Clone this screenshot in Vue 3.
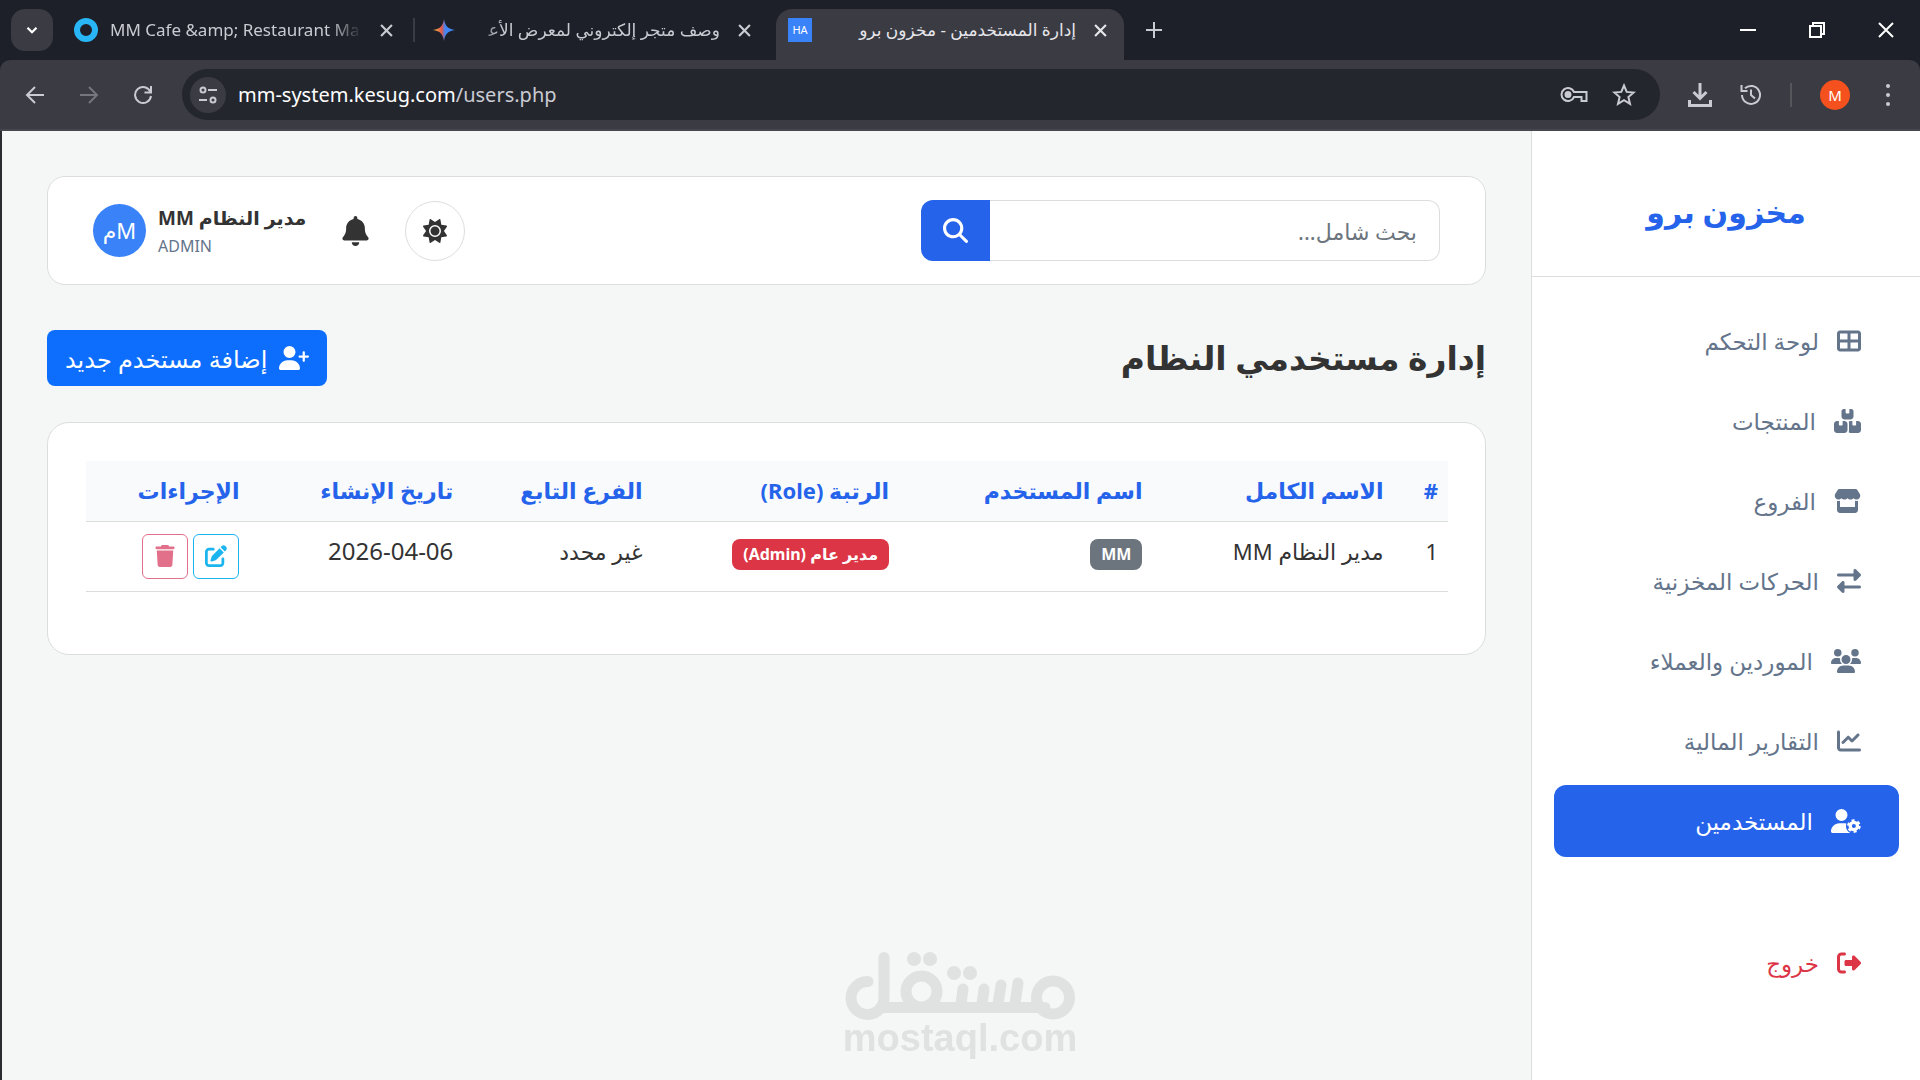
<template>
  <div class="window">
    <header class="browser">
      <div class="tab-strip">
        <button class="tab-search" aria-label="Search tabs">
          <svg viewBox="0 0 24 24"><path d="M6 9l6 6 6-6" fill="none" stroke="currentColor" stroke-width="3" /></svg>
        </button>

        <div class="tab first">
          <svg class="favicon" viewBox="0 0 24 24"><circle cx="12" cy="12" r="9" fill="none" stroke="#29b6f6" stroke-width="6" /></svg>
          <span class="tab-title fade-end">{{ tabs.cafe }}</span>
          <button class="tab-close" aria-label="Close"><svg viewBox="0 0 12 12"><path :d="icons.cross" /></svg></button>
        </div>
        <span class="tab-divider"></span>
        <div class="tab second">
          <svg class="favicon" viewBox="0 0 24 24">
            <defs>
              <linearGradient id="spark" x1="0" y1="0" x2="1" y2="0">
                <stop offset="0" stop-color="#f5b83d" />
                <stop offset="0.4" stop-color="#e2574c" />
                <stop offset="0.55" stop-color="#4285f4" />
                <stop offset="1" stop-color="#4285f4" />
              </linearGradient>
            </defs>
            <path d="M12 1c1 7 4 10 11 11-7 1-10 4-11 11-1-7-4-10-11-11 7-1 10-4 11-11z" fill="url(#spark)" />
          </svg>
          <span class="tab-title fade-start" dir="rtl">{{ tabs.shop }}</span>
          <button class="tab-close" aria-label="Close"><svg viewBox="0 0 12 12"><path :d="icons.cross" /></svg></button>
        </div>
        <div class="tab active">
          <span class="favicon favicon-text">HA</span>
          <span class="tab-title" dir="rtl">{{ tabs.users }}</span>
          <button class="tab-close" aria-label="Close"><svg viewBox="0 0 12 12"><path :d="icons.cross" /></svg></button>
        </div>
        <button class="new-tab" aria-label="New tab">
          <svg viewBox="0 0 16 16"><path d="M8 0v16M0 8h16" /></svg>
        </button>

        <div class="window-controls">
          <button aria-label="Minimize"><svg viewBox="0 0 16 16"><path d="M0 8h16" /></svg></button>
          <button aria-label="Restore"><svg viewBox="0 0 16 16"><path d="M1 4h11v11H1zM4 4V1h11v11h-3" /></svg></button>
          <button aria-label="Close window"><svg viewBox="0 0 16 16"><path d="M1 1l14 14M15 1L1 15" /></svg></button>
        </div>
      </div>

      <div class="toolbar">
        <div class="nav-buttons">
          <button aria-label="Back"><svg viewBox="0 0 20 20"><path d="M19 10H2M10 2l-8 8 8 8" /></svg></button>
          <button class="dim" aria-label="Forward"><svg viewBox="0 0 20 20"><path d="M1 10h17M10 2l8 8-8 8" /></svg></button>
          <button aria-label="Reload"><svg viewBox="0 0 20 20"><path d="M17.5 7A8 8 0 1 0 18 11M18 1v6.5h-6.5" /></svg></button>
        </div>
        <div class="omnibox">
          <button class="site-info" aria-label="Site information">
            <svg viewBox="0 0 20 20"><circle cx="5" cy="5" r="2.5" /><path d="M10 5h9M1 15h8" /><circle cx="15" cy="15" r="2.5" /></svg>
          </button>
          <span class="url"><b>mm-system.kesug.com</b>/users.php</span>
          <button aria-label="Passwords">
            <svg class="key" viewBox="0 0 28 20"><path d="M14 7h12.5v9h-5v-4H14a6.5 6.5 0 1 1 0-5z" /><circle class="solid" cx="8" cy="9.5" r="2.5" /></svg>
          </button>
          <button aria-label="Bookmark">
            <svg class="star" viewBox="0 0 24 24"><path d="M12 2.5l2.7 6.400 6.900.6-5.200 4.500 1.600 6.800-6-3.600-6 3.600L7.600 14 2.400 9.500l6.900-.6z" /></svg>
          </button>
        </div>
        <div class="toolbar-end">
          <button aria-label="Downloads"><svg class="large" viewBox="0 0 24 24"><path d="M12 0v15M5.500 9l6.500 6.500L18.500 9M1.500 17v5.500h21V17" /></svg></button>
          <button aria-label="History"><svg viewBox="0 0 22 22"><path d="M2 11a9 9 0 1 0 3-6.800M1.500 1v6h6M11 5.500V11l4 3.500" /></svg></button>
          <span class="toolbar-divider"></span>
          <button class="profile" aria-label="Profile">M</button>
          <button aria-label="Menu"><svg class="dots" viewBox="0 0 4 22"><circle cx="2" cy="2" r="2" /><circle cx="2" cy="11" r="2" /><circle cx="2" cy="20" r="2" /></svg></button>
        </div>
      </div>
    </header>

    <div class="app" dir="rtl" lang="ar">
      <aside class="sidebar">
        <div class="brand">مخزون برو</div>
        <nav class="menu">
          <a
            v-for="item in menu"
            :key="item.label"
            href="#"
            class="menu-link"
            :class="{ active: item.active, logout: item.logout }"
          >
            <svg class="icon" :class="{ wide: item.width === 640, mid: item.width === 576 }" :viewBox="`0 0 ${item.width} 512`">
              <path :d="item.icon" />
              <g v-if="item.active">
                <circle cx="488" cy="364" r="78" fill="none" stroke="currentColor" stroke-width="70" />
                <circle cx="488" cy="364" r="124" fill="none" stroke="currentColor" stroke-width="44" stroke-dasharray="65 64.85" />
              </g>
            </svg>
            <span>{{ item.label }}</span>
          </a>
        </nav>
      </aside>

      <main class="content">
        <section class="topbar">
          <form class="search" @submit.prevent>
            <input v-model="query" type="text" aria-label="بحث شامل" placeholder="بحث شامل..." />
            <button type="submit" aria-label="بحث">
              <svg viewBox="0 0 512 512"><path :d="icons.search" /></svg>
            </button>
          </form>
          <div class="account">
            <button class="theme-toggle" aria-label="المظهر"><svg viewBox="0 0 512 512"><path :d="icons.sun" /></svg></button>
            <button class="bell" aria-label="الإشعارات"><svg viewBox="0 0 448 512"><path :d="icons.bell" /></svg></button>
            <div class="profile-card">
              <div class="profile-text">
                <strong>مدير النظام MM</strong>
                <small>ADMIN</small>
              </div>
              <span class="avatar">Mم</span>
            </div>
          </div>
        </section>

        <div class="page-head">
          <h1>إدارة مستخدمي النظام</h1>
          <button class="add-user">
            <svg viewBox="0 0 640 512"><path :d="icons.userPlus" /></svg>
            <span>إضافة مستخدم جديد</span>
          </button>
        </div>

        <section class="card">
          <table>
            <thead>
              <tr>
                <th class="c-id">#</th>
                <th class="c-name">الاسم الكامل</th>
                <th class="c-login">اسم المستخدم</th>
                <th class="c-role">الرتبة (Role)</th>
                <th class="c-branch">الفرع التابع</th>
                <th class="c-date">تاريخ الإنشاء</th>
                <th class="c-actions">الإجراءات</th>
              </tr>
            </thead>
            <tbody>
              <tr v-for="user in users" :key="user.id">
                <td>{{ user.id }}</td>
                <td>{{ user.name }}</td>
                <td><span class="badge">{{ user.login }}</span></td>
                <td><span class="badge danger">{{ user.role }}</span></td>
                <td>{{ user.branch }}</td>
                <td class="date">{{ user.created }}</td>
                <td>
                  <div class="actions">
                    <button class="edit" aria-label="تعديل"><svg viewBox="0 0 512 512"><path :d="icons.edit" /></svg></button>
                    <button class="delete" aria-label="حذف"><svg viewBox="0 0 448 512"><path :d="icons.trash" /></svg></button>
                  </div>
                </td>
              </tr>
            </tbody>
          </table>
        </section>
      </main>
    </div>

    <div class="watermark">
      <svg viewBox="0 0 230 68">
        <path d="M39 5.500V45.500A16.500 16.500 0 1 1 23 29.500M36 55.500H200M118 37l-2 15M139 37l-2 15M156 33l-3 19M173 31l-3 21" />
        <circle cx="76.5" cy="39.5" r="15.5" />
        <circle cx="208" cy="45.5" r="16.5" />
        <g class="dot">
          <circle cx="69" cy="7" r="7" />
          <circle cx="85" cy="7" r="7" />
          <circle cx="109" cy="21" r="7" />
          <circle cx="125" cy="21" r="7" />
        </g>
      </svg>
      <span>mostaql.com</span>
    </div>
  </div>
</template>

<script setup>
import { ref } from 'vue'

const query = ref('')

const tabs = {
  cafe: 'MM Cafe &amp; Restaurant Ma',
  shop: 'وصف متجر إلكتروني لمعرض الأع\u200d',
  users: 'إدارة المستخدمين - مخزون برو'
}

const icons = {
  cross: 'M1 1l10 10M11 1L1 11',
  search: 'M416 208c0 45.9-14.9 88.3-40 122.7L502.6 457.4c12.5 12.5 12.5 32.8 0 45.3s-32.8 12.5-45.3 0L330.7 376c-34.4 25.2-76.8 40-122.7 40C93.1 416 0 322.9 0 208S93.1 0 208 0S416 93.1 416 208zM208 352a144 144 0 1 0 0-288 144 144 0 1 0 0 288z',
  sun: 'M361.5 1.2c5 2.1 8.6 6.6 9.6 11.9L391 121l107.9 19.8c5.3 1 9.8 4.6 11.9 9.6s1.5 10.7-1.6 15.2L446.9 256l62.3 90.3c3.1 4.5 3.7 10.2 1.6 15.2s-6.6 8.6-11.9 9.6L391 391 371.1 498.9c-1 5.3-4.6 9.8-9.6 11.9s-10.7 1.5-15.2-1.6L256 446.9l-90.3 62.3c-4.5 3.1-10.2 3.7-15.2 1.6s-8.6-6.6-9.6-11.9L121 391 13.1 371.1c-5.3-1-9.8-4.6-11.9-9.6s-1.5-10.7 1.6-15.2L65.1 256 2.8 165.7c-3.1-4.5-3.7-10.2-1.6-15.2s6.6-8.6 11.9-9.6L121 121 140.9 13.1c1-5.3 4.6-9.8 9.6-11.9s10.7-1.5 15.2 1.6L256 65.1 346.3 2.8c4.5-3.1 10.2-3.7 15.2-1.6zM160 256a96 96 0 1 1 192 0 96 96 0 1 1 -192 0zm224 0a128 128 0 1 0 -256 0 128 128 0 1 0 256 0z',
  bell: 'M224 0c-17.7 0-32 14.3-32 32V51.2C119 66 64 130.6 64 208v18.8c0 47-17.3 92.4-48.5 127.6l-7.4 8.3c-8.4 9.4-10.4 22.9-5.3 34.4S19.4 416 32 416H416c12.6 0 24-7.4 29.2-18.9s3.1-25-5.3-34.4l-7.4-8.3C401.3 319.2 384 273.9 384 226.8V208c0-77.4-55-142-128-156.8V32c0-17.7-14.3-32-32-32zm45.3 493.3c12-12 18.7-28.3 18.7-45.3H224 160c0 17 6.7 33.3 18.7 45.3s28.3 18.7 45.3 18.7s33.3-6.7 45.3-18.7z',
  userPlus: 'M96 128a128 128 0 1 1 256 0A128 128 0 1 1 96 128zM0 482.3C0 383.8 79.8 304 178.3 304h91.4C368.2 304 448 383.8 448 482.3c0 16.4-13.3 29.7-29.7 29.7H29.7C13.3 512 0 498.7 0 482.3zM504 312V248H440c-13.3 0-24-10.7-24-24s10.7-24 24-24h64V136c0-13.3 10.7-24 24-24s24 10.7 24 24v64h64c13.3 0 24 10.7 24 24s-10.7 24-24 24H552v64c0 13.3-10.7 24-24 24s-24-10.7-24-24z',
  edit: 'M471.6 21.7c-21.9-21.9-57.3-21.9-79.2 0L362.3 51.7l97.9 97.9 30.1-30.1c21.9-21.9 21.9-57.3 0-79.2L471.6 21.7zm-299.2 220c-6.1 6.1-10.8 13.6-13.5 21.9l-29.6 88.8c-2.9 8.6-.6 18.1 5.8 24.6s15.9 8.7 24.6 5.8l88.8-29.6c8.2-2.7 15.7-7.4 21.9-13.5L437.7 172.3 339.7 74.3 172.4 241.7zM96 64C43 64 0 107 0 160V416c0 53 43 96 96 96H352c53 0 96-43 96-96V320c0-17.7-14.3-32-32-32s-32 14.3-32 32v96c0 17.7-14.3 32-32 32H96c-17.7 0-32-14.3-32-32V160c0-17.7 14.3-32 32-32h96c17.7 0 32-14.3 32-32s-14.3-32-32-32H96z',
  trash: 'M135.2 17.7L128 32H32C14.3 32 0 46.3 0 64S14.3 96 32 96H416c17.7 0 32-14.3 32-32s-14.3-32-32-32H320l-7.2-14.3C307.4 6.8 296.3 0 284.2 0H163.8c-12.1 0-23.2 6.8-28.6 17.7zM416 128H32L53.2 467c1.6 25.3 22.6 45 47.9 45H346.9c25.3 0 46.3-19.7 47.9-45L416 128z'
}

const menu = [
  {
    label: 'لوحة التحكم',
    width: 512,
    icon: 'M448 96V224H288V96H448zm0 192V416H288V288H448zM224 224H64V96H224V224zM64 288H224V416H64V288zM64 32C28.7 32 0 60.7 0 96V416c0 35.3 28.7 64 64 64H448c35.3 0 64-28.7 64-64V96c0-35.3-28.7-64-64-64H64z'
  },
  {
    label: 'المنتجات',
    width: 576,
    icon: 'M248 0H208c-26.5 0-48 21.5-48 48V160c0 35.3 28.7 64 64 64H352c35.3 0 64-28.7 64-64V48c0-26.5-21.5-48-48-48H328V80c0 8.8-7.2 16-16 16H264c-8.8 0-16-7.2-16-16V0zM64 256c-35.3 0-64 28.7-64 64V448c0 35.3 28.7 64 64 64H224c35.3 0 64-28.7 64-64V320c0-35.3-28.7-64-64-64H184v80c0 8.8-7.2 16-16 16H120c-8.8 0-16-7.2-16-16V256H64zM352 512H512c35.3 0 64-28.7 64-64V320c0-35.3-28.7-64-64-64H472v80c0 8.8-7.2 16-16 16H408c-8.8 0-16-7.2-16-16V256H352c-15 0-28.8 5.1-39.7 13.8c4.9 10.4 7.7 22 7.7 34.2V464c0 12.2-2.8 23.8-7.7 34.2C323.2 506.9 337 512 352 512z'
  },
  {
    label: 'الفروع',
    width: 576,
    icon: 'M547.6 103.8L490.3 13.1C485.2 5 476.1 0 466.4 0H109.6C99.9 0 90.8 5 85.7 13.1L28.3 103.8c-29.6 46.8-3.4 111.9 51.9 119.4c4 .5 8.1 .8 12.1 .8c26.1 0 49.3-11.4 65.2-29c15.9 17.6 39.1 29 65.2 29c26.1 0 49.3-11.4 65.2-29c15.9 17.6 39.1 29 65.2 29c26.2 0 49.3-11.4 65.2-29c16 17.6 39.1 29 65.2 29c4.1 0 8.1-.3 12.1-.8c55.5-7.4 81.8-72.5 52.1-119.4zM499.7 254.9l-.1 0c-5.3 .7-10.7 1.1-16.2 1.1c-12.4 0-24.3-1.9-35.4-5.3V384H128V250.6c-11.2 3.5-23.2 5.4-35.6 5.4c-5.5 0-11-.4-16.3-1.1l-.1 0c-4.1-.6-8.1-1.3-12-2.3V384v64c0 35.3 28.7 64 64 64H448c35.3 0 64-28.7 64-64V384 252.6c-4 1-8 1.8-12.3 2.3z'
  },
  {
    label: 'الحركات المخزنية',
    width: 512,
    icon: 'M32 96l320 0V32c0-12.9 7.8-24.6 19.8-29.6s25.7-2.2 34.9 6.9l96 96c6 6 9.4 14.1 9.4 22.6s-3.4 16.6-9.4 22.6l-96 96c-9.2 9.2-22.9 11.9-34.9 6.9s-19.8-16.6-19.8-29.6V160L32 160c-17.7 0-32-14.3-32-32s14.3-32 32-32zM480 352c17.7 0 32 14.3 32 32s-14.3 32-32 32H160v64c0 12.9-7.8 24.6-19.8 29.6s-25.7 2.2-34.9-6.9l-96-96c-6-6-9.4-14.1-9.4-22.6s3.4-16.6 9.4-22.6l96-96c9.2-9.2 22.9-11.9 34.9-6.9s19.8 16.6 19.8 29.6l0 64H480z'
  },
  {
    label: 'الموردين والعملاء',
    width: 640,
    icon: 'M144 0a80 80 0 1 1 0 160A80 80 0 1 1 144 0zM512 0a80 80 0 1 1 0 160A80 80 0 1 1 512 0zM0 298.7C0 239.8 47.8 192 106.7 192h42.7c15.9 0 31 3.5 44.6 9.7c-1.3 7.2-1.9 14.7-1.9 22.3c0 38.2 16.8 72.5 43.3 96c-.2 0-.4 0-.7 0H21.3C9.6 320 0 310.4 0 298.7zM405.3 320c-.2 0-.4 0-.7 0c26.6-23.5 43.3-57.8 43.3-96c0-7.6-.7-15-1.9-22.3c13.6-6.3 28.7-9.7 44.6-9.7h42.7C592.2 192 640 239.8 640 298.7c0 11.8-9.6 21.3-21.3 21.3H405.3zM224 224a96 96 0 1 1 192 0 96 96 0 1 1 -192 0zM128 485.3C128 411.7 187.7 352 261.3 352H378.7C452.3 352 512 411.7 512 485.3c0 14.7-11.9 26.7-26.7 26.7H154.7c-14.7 0-26.7-11.9-26.7-26.7z'
  },
  {
    label: 'التقارير المالية',
    width: 512,
    icon: 'M64 64c0-17.7-14.3-32-32-32S0 46.3 0 64V400c0 44.2 35.8 80 80 80H480c17.7 0 32-14.3 32-32s-14.3-32-32-32H80c-8.8 0-16-7.2-16-16V64zm406.6 86.6c12.5-12.5 12.5-32.8 0-45.3s-32.8-12.5-45.3 0L320 210.7l-57.4-57.4c-12.5-12.5-32.8-12.5-45.3 0l-112 112c-12.5 12.5-12.5 32.8 0 45.3s32.8 12.5 45.3 0L240 221.3l57.4 57.4c12.5 12.5 32.8 12.5 45.3 0l128-128z'
  },
  {
    label: 'المستخدمين',
    width: 640,
    active: true,
    icon: 'M224 256A128 128 0 1 0 224 0a128 128 0 1 0 0 256zM178 304C80 304 0 384 0 482c0 17 13 30 30 30H412C350 480 318 430 320 364c0-20 4-38 10-52-18-5-38-8-60-8z'
  },
  {
    label: 'خروج',
    width: 512,
    logout: true,
    icon: 'M377.9 105.9L500.7 228.7c7.2 7.2 11.3 17.1 11.3 27.3s-4.1 20.1-11.3 27.3L377.9 406.1c-6.4 6.4-15 9.9-24 9.9c-18.7 0-33.9-15.2-33.9-33.9l0-62.1-128 0c-17.7 0-32-14.3-32-32l0-64c0-17.7 14.3-32 32-32l128 0 0-62.1c0-18.7 15.2-33.9 33.9-33.9c9 0 17.6 3.6 24 9.9zM160 96L96 96c-17.7 0-32 14.3-32 32l0 256c0 17.7 14.3 32 32 32l64 0c17.7 0 32 14.3 32 32s-14.3 32-32 32l-64 0c-53 0-96-43-96-96L0 128C0 75 43 32 96 32l64 0c17.7 0 32 14.3 32 32s-14.3 32-32 32z'
  }
]

const users = [
  {
    id: 1,
    name: 'مدير النظام MM',
    login: 'MM',
    role: 'مدير عام (Admin)',
    branch: 'غير محدد',
    created: '2026-04-06'
  }
]
</script>

<style>
body {
  margin: 0;
  background: #f4f7f6;
}
</style>

<style scoped>
* {
  box-sizing: border-box;
}

button {
  display: inline-flex;
  align-items: center;
  justify-content: center;
  margin: 0;
  padding: 0;
  border: none;
  background: none;
  color: inherit;
  font: inherit;
  cursor: pointer;
}

.window {
  display: flex;
  flex-direction: column;
  min-height: 100vh;
  font-family: "Noto Sans", "DejaVu Sans", sans-serif;
}

/* browser frame */
.browser {
  background: #1d2028;
  color: #c9cad2;
}

.browser svg {
  fill: none;
  stroke: currentColor;
  stroke-width: 2;
}

.tab-strip {
  display: flex;
  align-items: center;
  height: 60px;
  padding-left: 11px;
}

.tab-search {
  width: 42px;
  height: 42px;
  border-radius: 14px;
  background: #3a3b43;
  color: #fff;
}

.tab-search svg {
  width: 18px;
  height: 18px;
}

.tab {
  display: flex;
  align-items: center;
  gap: 12px;
  font-size: 17px;
}

.tab.first {
  width: 324px;
  margin: 0 15px 0 21px;
}

.tab.second {
  width: 324px;
  margin: 0 20px 0 17px;
}

.tab.active {
  align-self: flex-end;
  width: 348px;
  height: 51px;
  padding: 0 12px 9px;
  border-radius: 16px 16px 0 0;
  background: #3a3b43;
  color: #e6e6ea;
}

.favicon {
  flex: none;
  width: 24px;
  height: 24px;
}

.browser .favicon path {
  stroke: none;
}

.browser .favicon circle {
  stroke-width: 6;
}

.favicon-text {
  background: #3a82f7;
  color: #fff;
  font-size: 11px;
  line-height: 24px;
  text-align: center;
}

.tab-title {
  flex: 1;
  line-height: 30px;
  white-space: nowrap;
}

.fade-end {
  mask-image: linear-gradient(to left, transparent, #000 32px);
}

.fade-start {
  mask-image: linear-gradient(to right, transparent, #000 32px);
}

.tab-close {
  width: 24px;
  height: 24px;
}

.tab-close svg {
  width: 13px;
  height: 13px;
}

.tab-divider {
  width: 2px;
  height: 24px;
  background: #3a3b43;
}

.new-tab {
  width: 36px;
  height: 36px;
  margin-left: 12px;
}

.new-tab svg {
  width: 16px;
  height: 16px;
}

.window-controls {
  display: flex;
  margin-left: auto;
  color: #fff;
}

.window-controls button {
  width: 69px;
  height: 60px;
}

.window-controls svg {
  width: 16px;
  height: 16px;
}

.toolbar {
  display: flex;
  align-items: center;
  height: 71px;
  border-bottom: 2px solid #46474e;
  border-radius: 10px 10px 0 0;
  background: #3a3b43;
}

.nav-buttons {
  display: flex;
  padding: 0 12px 0 8px;
}

.nav-buttons button {
  width: 54px;
  height: 48px;
}

.nav-buttons svg {
  width: 20px;
  height: 20px;
}

.nav-buttons .dim {
  color: #76777e;
}

.omnibox {
  display: flex;
  flex: 1;
  align-items: center;
  gap: 24px;
  height: 51px;
  padding: 0 24px 0 8px;
  border-radius: 26px;
  background: #24262e;
}

.site-info {
  width: 36px;
  height: 36px;
  border-radius: 50%;
  background: #3a3b43;
}

.site-info svg {
  width: 20px;
  height: 20px;
}

.url {
  flex: 1;
  margin-left: -12px;
  font-size: 20px;
}

.url b {
  color: #fff;
  font-weight: 400;
}

.key {
  width: 28px;
  height: 20px;
}

.browser .solid {
  fill: currentColor;
}

.star {
  width: 24px;
  height: 24px;
}

.toolbar-end {
  display: flex;
  align-items: center;
  gap: 28px;
  padding: 0 30px 0 28px;
}

.toolbar-end svg {
  width: 22px;
  height: 22px;
}

.toolbar-end .large {
  width: 24px;
  height: 24px;
  stroke-width: 3;
}

.toolbar-end .dots {
  width: 4px;
  height: 22px;
  fill: currentColor;
  stroke: none;
}

.toolbar-divider {
  width: 2px;
  height: 24px;
  background: #55565c;
}

.profile {
  width: 30px;
  height: 30px;
  margin-right: 8px;
  border-radius: 50%;
  background: #f4511e;
  color: #fff;
  font-size: 15px;
}

/* page */
.app {
  display: flex;
  flex: 1;
  border-left: 2px solid #2b2c30;
  background: #f4f7f6;
  color: #333;
}

.app svg {
  fill: currentColor;
}

.sidebar {
  flex: none;
  width: 389px;
  border-left: 1px solid #dcdede;
  background: #fff;
}

.brand {
  padding: 54px 0 38px;
  border-bottom: 1px solid #dcdede;
  color: #2563eb;
  font-size: 30px;
  font-weight: 700;
  line-height: 53px;
  text-align: center;
}

.menu {
  display: flex;
  flex-direction: column;
  gap: 8px;
  padding: 28px 21px 28px 22px;
}

.menu-link {
  display: flex;
  align-items: center;
  gap: 18px;
  height: 72px;
  padding: 0 38px;
  border-radius: 12px;
  color: #64748b;
  font-size: 23px;
  text-decoration: none;
}

.menu-link.active {
  background: #2563eb;
  color: #fff;
}

.menu-link.logout {
  margin-top: 62px;
  color: #dc3545;
}

.icon {
  flex: none;
  width: 24px;
  height: 24px;
}

.icon.mid {
  width: 27px;
}

.icon.wide {
  width: 30px;
}

.content {
  flex: 1;
  min-width: 0;
  padding: 45px;
}

.topbar {
  display: flex;
  align-items: center;
  justify-content: space-between;
  padding: 23px 45px;
  border: 1px solid #dcdede;
  border-radius: 18px;
  background: #fff;
}

.search {
  display: flex;
  width: 519px;
}

.search input {
  flex: 1;
  min-width: 0;
  height: 61px;
  padding: 0 22px;
  border: 1px solid #dcdede;
  border-left: none;
  border-radius: 0 12px 12px 0;
  background: #fff;
  color: #333;
  font-family: inherit;
  font-size: 22px;
}

.search input::placeholder {
  color: #6c757d;
  opacity: 1;
}

.search button {
  width: 69px;
  border-radius: 12px 0 0 12px;
  background: #2563eb;
  color: #fff;
}

.search svg {
  width: 25px;
  height: 25px;
}

.account {
  display: flex;
  align-items: center;
}

.theme-toggle {
  width: 60px;
  height: 60px;
  border: 1px solid #dcdede;
  border-radius: 50%;
}

.theme-toggle svg {
  width: 24px;
  height: 24px;
}

.bell {
  margin: 0 36px;
}

.bell svg {
  width: 27px;
  height: 30px;
}

.profile-card {
  display: flex;
  align-items: center;
  gap: 12px;
}

.profile-text {
  display: flex;
  flex-direction: column;
  align-items: flex-end;
}

.profile-text strong {
  font-size: 19px;
  line-height: 30px;
}

.profile-text small {
  color: #64748b;
  font-size: 16px;
  line-height: 26px;
}

.avatar {
  width: 53px;
  height: 53px;
  border-radius: 50%;
  background: #3a82f7;
  color: #fff;
  font-size: 22px;
  line-height: 53px;
  text-align: center;
}

.page-head {
  display: flex;
  align-items: center;
  justify-content: space-between;
  margin: 45px 0 36px;
}

h1 {
  margin: 0;
  font-size: 33px;
  line-height: 52px;
}

.add-user {
  gap: 12px;
  height: 56px;
  padding: 0 18px;
  border-radius: 8px;
  background: #0d6efd;
  color: #fff;
  font-size: 24px;
}

.add-user svg {
  width: 30px;
  height: 24px;
}

.card {
  padding: 38px 37px 62px 38px;
  border: 1px solid #dcdede;
  border-radius: 22px;
  background: #fff;
}

table {
  width: 100%;
  border-collapse: collapse;
  table-layout: fixed;
}

th {
  height: 60px;
  padding: 0 10px 2px;
  border-bottom: 1px solid #dcdede;
  background: #f8fafc;
  color: #2563eb;
  font-size: 22px;
  text-align: right;
  white-space: nowrap;
}

.c-id {
  width: 4%;
}

.c-name {
  width: 17.7%;
}

.c-login {
  width: 18.6%;
}

.c-role {
  width: 18.1%;
}

.c-branch {
  width: 13.9%;
}

.c-date {
  width: 15.7%;
}

.c-actions {
  width: 12%;
}

td {
  padding: 12px 10px;
  border-bottom: 1px solid #dcdede;
  font-size: 22px;
  line-height: 34px;
  vertical-align: top;
  white-space: nowrap;
}

.date {
  font-size: 24px;
}

.badge {
  display: inline-block;
  padding: 0 11px;
  border-radius: 8px;
  background: #6c757d;
  color: #fff;
  font-size: 16px;
  font-weight: 700;
  line-height: 31px;
}

.badge.danger {
  background: #dc3545;
}

.actions {
  display: flex;
  gap: 5px;
}

.actions button {
  width: 46px;
  height: 45px;
  border: 1px solid currentColor;
  border-radius: 6px;
}

.actions svg {
  width: 22px;
  height: 22px;
}

.edit {
  color: #1ab5ee;
}

.delete {
  color: #e2708a;
}

/* floating mark over the page */
.watermark {
  position: fixed;
  bottom: 24px;
  left: 50%;
  display: flex;
  flex-direction: column;
  align-items: center;
  width: 230px;
  margin-left: -115px;
  color: #e0e2e1;
}

.watermark svg {
  width: 230px;
  height: 68px;
  fill: none;
  stroke: currentColor;
  stroke-width: 11;
  stroke-linecap: round;
}

.watermark .dot {
  fill: currentColor;
  stroke: none;
}

.watermark span {
  font-family: "Liberation Sans", sans-serif;
  font-size: 38px;
  font-weight: 700;
  line-height: 36px;
}
</style>
